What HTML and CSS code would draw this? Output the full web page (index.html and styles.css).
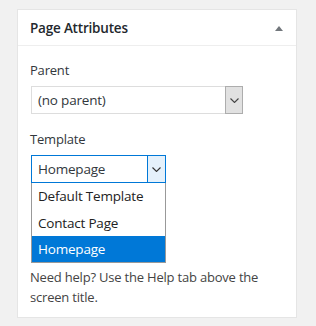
FILE: index.html
```html
<!DOCTYPE html>
<html>
<head>
<meta charset="utf-8">
<link rel="stylesheet" href="styles.css">
</head>
<body>
<div class="panel">
  <div class="panel-head">
    <h2 class="panel-title">Page Attributes</h2>
    <span class="toggle"></span>
  </div>
  <div class="panel-body">
    <p class="label">Parent</p>
    <div class="select">
      <span class="select-value">(no parent)</span>
      <span class="select-btn"><svg width="9" height="5" viewBox="0 0 9 5"><path d="M0.5 0.5 L4.5 4.5 L8.5 0.5" fill="none" stroke="#444" stroke-width="1.1"/></svg></span>
    </div>
    <p class="label">Template</p>
    <div class="select select-open">
      <span class="select-value">Homepage</span>
      <span class="select-btn"><svg width="9" height="5" viewBox="0 0 9 5"><path d="M0.5 0.5 L4.5 4.5 L8.5 0.5" fill="none" stroke="#333" stroke-width="1.1"/></svg></span>
    </div>
    <ul class="listbox">
      <li class="option">Default Template</li>
      <li class="option">Contact Page</li>
      <li class="option option-selected">Homepage</li>
    </ul>
    <p class="help">Need help? Use the Help tab above the screen title.</p>
  </div>
</div>
</body>
</html>
```

FILE: styles.css
```css
html, body {
  margin: 0;
  padding: 0;
  background: #f1f1f1;
}
body {
  font-family: "Open Sans", "Noto Sans", sans-serif;
  color: #23282d;
}
.panel {
  margin: 9px 0 0 17px;
  width: 278px;
  height: 307px;
  background: #fff;
  border: 1px solid #e5e5e5;
}
.panel-head {
  display: flex;
  align-items: center;
  justify-content: space-between;
  height: 35px;
  padding: 0 12px 0 12px;
  border-bottom: 1px solid #eee;
}
.panel-title {
  margin: 0;
  font-size: 13.5px;
  font-weight: 600;
  letter-spacing: -0.2px;
  color: #23282d;
}
.toggle {
  width: 0;
  height: 0;
  border-left: 4px solid transparent;
  border-right: 4px solid transparent;
  border-bottom: 5px solid #72777c;
  margin-right: 1px;
  margin-top: 1px;
}
.panel-body {
  padding: 14px 12px 0 12px;
}
.label {
  margin: 0 0 6px 0;
  font-size: 13px;
  line-height: 20px;
  letter-spacing: -0.2px;
  color: #32373c;
}
.select {
  display: flex;
  box-sizing: border-box;
  width: 212px;
  height: 28px;
  margin: 0 0 15px 1px;
  border: 1px solid #ddd;
  background: #fff;
  font-size: 13.5px;
  color: #32373c;
}
.select-value {
  flex: 1;
  padding-left: 6px;
  line-height: 26px;
  letter-spacing: -0.2px;
}
.select-btn {
  display: flex;
  align-items: center;
  justify-content: center;
  box-sizing: border-box;
  width: 18px;
  margin: -1px -1px -1px 0;
  background: #e1e1e1;
  border: 1px solid #adadad;
}
.select-open {
  width: 135px;
  margin-bottom: 0;
  border-color: #0078d7;
}
.select-open .select-btn {
  width: 19px;
  background: #e5f1fb;
  border-color: #0078d7;
}
.listbox {
  list-style: none;
  margin: 0 0 0 1px;
  padding: 0;
  box-sizing: border-box;
  width: 135px;
  border: 1px solid #999;
  border-top: 0;
  background: #fff;
}
.option {
  height: 26px;
  line-height: 26px;
  padding-left: 6px;
  font-size: 13.5px;
  letter-spacing: -0.2px;
  color: #222;
}
.option:first-child {
  height: 27px;
}
.option-selected {
  background: #0078d7;
  color: #fff;
}
.help {
  margin: 4px 0 0 0;
  font-size: 13px;
  line-height: 20px;
  letter-spacing: -0.2px;
  color: #444;
}
```
